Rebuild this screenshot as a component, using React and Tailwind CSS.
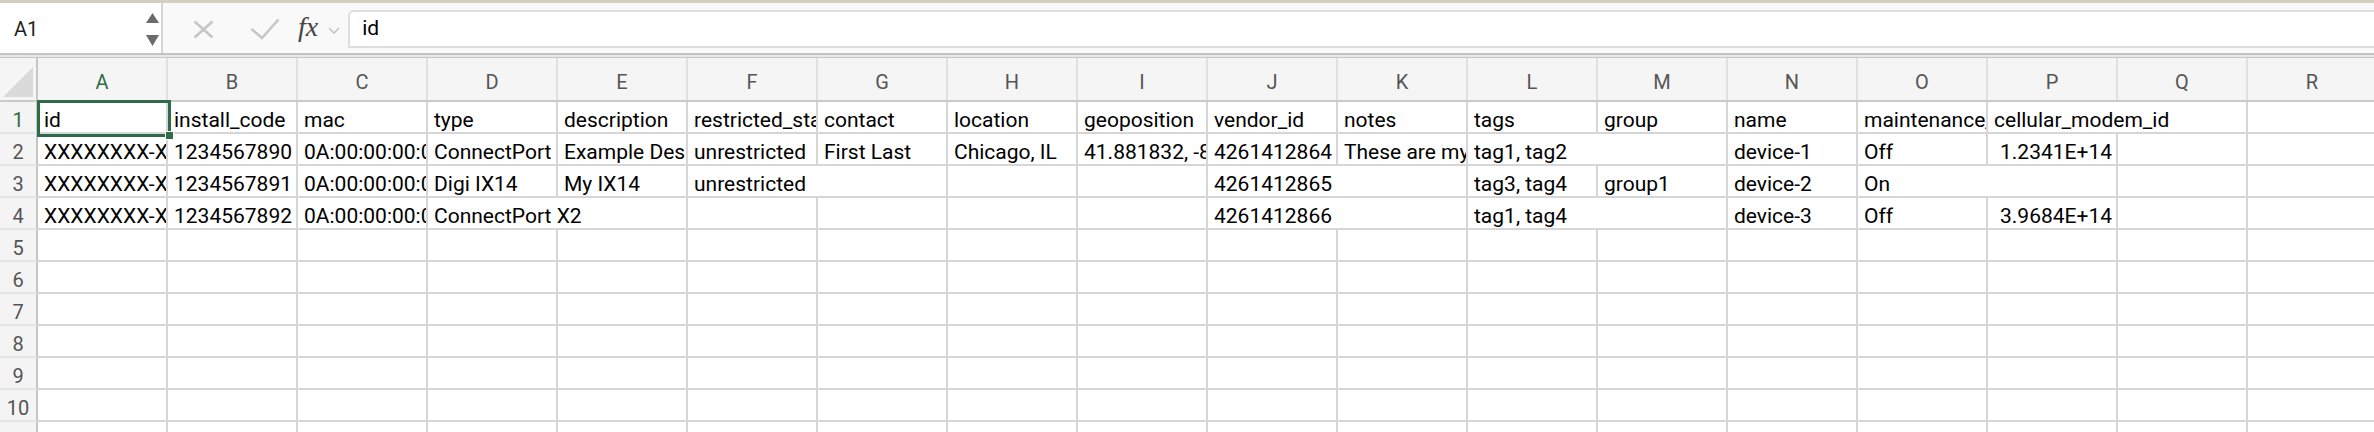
import React from "react";
import clsx from "clsx";

const COLS = ["A", "B", "C", "D", "E", "F", "G", "H", "I", "J", "K", "L", "M", "N", "O", "P", "Q", "R"];

// sheet data, one array per row (empty string = empty cell)
const ROWS = [
  ["id", "install_code", "mac", "type", "description", "restricted_status", "contact", "location", "geoposition", "vendor_id", "notes", "tags", "group", "name", "maintenance_mode", "cellular_modem_id", "", ""],
  ["XXXXXXXX-XXXXXXXX-XXXXXXXX-XXXXXXXX", "1234567890", "0A:00:00:00:00:01", "ConnectPort X2", "Example Description", "unrestricted", "First Last", "Chicago, IL", "41.881832, -87.623177", "4261412864", "These are my notes", "tag1, tag2", "", "device-1", "Off", "1.2341E+14", "", ""],
  ["XXXXXXXX-XXXXXXXX-XXXXXXXX-XXXXXXXX", "1234567891", "0A:00:00:00:00:02", "Digi IX14", "My IX14", "unrestricted", "", "", "", "4261412865", "", "tag3, tag4", "group1", "device-2", "On", "", "", ""],
  ["XXXXXXXX-XXXXXXXX-XXXXXXXX-XXXXXXXX", "1234567892", "0A:00:00:00:00:03", "ConnectPort X2", "", "", "", "", "", "4261412866", "", "tag1, tag4", "", "device-3", "Off", "3.9684E+14", "", ""],
];

const isNumber = (v) => /E\+\d+$/.test(v);

function Cell({ value, next }) {
  const right = isNumber(value);
  // text spills into the next cell when that one is empty (like Excel)
  const spill = value && !right && !next;
  return (
    <div
      className={clsx(
        "h-full w-[130px] shrink-0 border-b-2 border-[#d6d6d6] flex items-end whitespace-nowrap leading-[24px]",
        spill ? "overflow-visible relative z-10" : "overflow-hidden border-r-2",
        right ? "justify-end pr-[4px]" : "pl-[6px]"
      )}
    >
      <span>{value}</span>
    </div>
  );
}

function FormulaBar() {
  return (
    <div className="flex h-[52px] bg-[#f9f9f9] border-b-2 border-[#c4c4c4]">
      {/* name box */}
      <div className="w-[163px] shrink-0 bg-white border-r-2 border-[#d6d6d6] flex items-center justify-between pl-[14px] pr-[2px]">
        <span className="text-[20px] text-[#1f1f1f] mt-[2px]">A1</span>
        <svg width="13" height="34" viewBox="0 0 13 34" className="mt-[4px]">
          <polygon points="0,10 6.5,0 13,10" fill="#6b6b6b" />
          <polygon points="0,22 13,22 6.5,33" fill="#6b6b6b" />
        </svg>
      </div>

      {/* cancel / enter / fx */}
      <div className="flex items-center pl-[30px] mt-[2px]">
        <svg width="21" height="19" viewBox="0 0 21 19">
          <path d="M1.5 1.5 L19.5 17.5 M19.5 1.5 L1.5 17.5" stroke="#c6c6c6" strokeWidth="2.6" fill="none" />
        </svg>
        <svg width="30" height="22" viewBox="0 0 30 22" className="ml-[36px]">
          <path d="M1.5 11 L12 20 L28.5 1.5" stroke="#c6c6c6" strokeWidth="2.6" fill="none" />
        </svg>
        <span className="ml-[18px] text-[28px] italic text-[#444] font-['Liberation_Serif',serif] leading-none -mt-[4px]">fx</span>
        <svg width="12" height="7" viewBox="0 0 12 7" className="ml-[10px] mt-[2px]">
          <path d="M1 1 L6 6 L11 1" stroke="#c3c3c3" strokeWidth="1.5" fill="none" />
        </svg>
      </div>

      {/* formula input */}
      <div className="flex-1 ml-[8px] mt-[7px] h-[38px] bg-white border-2 border-r-0 border-[#dedede] rounded-tl-[6px] flex items-center pl-[12px]">
        <span className="text-[21px] text-black">id</span>
      </div>
    </div>
  );
}

export default function App() {
  return (
    <div className="relative w-[2374px] h-[432px] overflow-hidden bg-white font-['Roboto',sans-serif] text-[21px] text-black">
      <div className="h-[3px] bg-[#d3cfc2]" />
      <FormulaBar />
      <div className="h-[3px] bg-[#e7e7e7] border-b border-[#c6c6c6]" />

      {/* column headers */}
      <div className="flex h-[44px] bg-[#f5f5f5] border-b-2 border-[#cacaca]">
        <div className="w-[38px] shrink-0 border-r-2 border-[#c6c6c6] flex items-end justify-end p-[3px]">
          <svg width="30" height="30" viewBox="0 0 30 30">
            <polygon points="30,0 30,30 0,30" fill="#dadada" />
          </svg>
        </div>
        {COLS.map((c) => (
          <div
            key={c}
            className={clsx(
              "w-[130px] shrink-0 border-r-2 border-[#e0e0e0] flex items-center justify-center pt-[6px] text-[20px]",
              c === "A" ? "text-[#2f6b46]" : "text-[#555]"
            )}
          >
            {c}
          </div>
        ))}
      </div>

      {/* rows */}
      {Array.from({ length: 11 }, (_, r) => {
        const data = ROWS[r] || [];
        return (
          <div key={r} className="flex h-[32px]">
            <div
              className={clsx(
                "w-[38px] shrink-0 bg-[#f4f4f4] border-r-2 border-b-2 border-r-[#c4c4c4] border-b-[#e4e4e4] flex items-end justify-center leading-[24px] text-[20px]",
                r === 0 ? "text-[#2f6b46]" : "text-[#555]"
              )}
            >
              {r + 1}
            </div>
            {COLS.map((c, i) => (
              <Cell key={c} value={data[i] || ""} next={data[i + 1] || ""} />
            ))}
          </div>
        );
      })}

      {/* active cell selection */}
      <div className="absolute left-[37px] top-[100px] w-[134px] h-[37px] border-[3px] border-[#2f6b46] pointer-events-none">
        <div className="absolute -right-[6px] -bottom-[6px] w-[9px] h-[9px] bg-[#2f6b46] border border-white" />
      </div>
    </div>
  );
}
